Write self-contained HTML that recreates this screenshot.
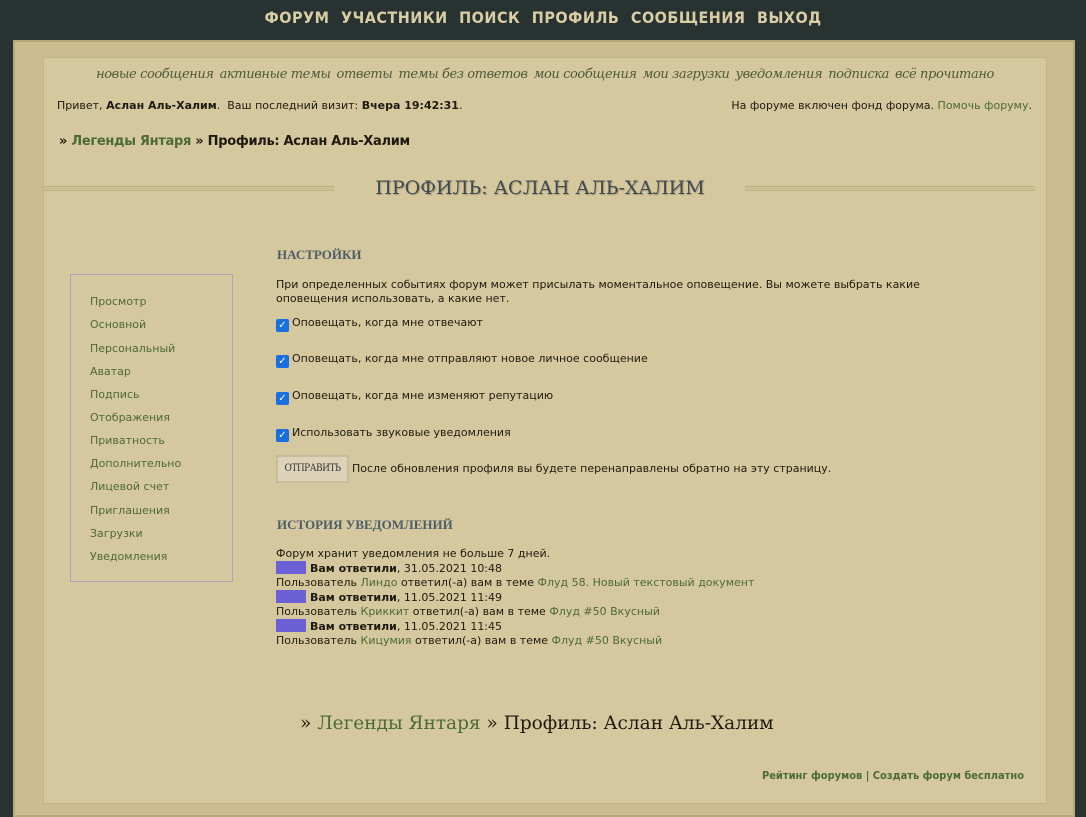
<!DOCTYPE html>
<html><head><meta charset="utf-8"><style>
body{margin:0;width:1086px;height:817px;overflow:hidden;background:#283230;font-family:"DejaVu Sans","Liberation Sans",sans-serif;font-size:11px;color:#1e1a10;position:relative}
a{color:#4c6a36;text-decoration:none}
.top{position:absolute;top:0;left:0;width:1086px;height:38px;text-align:center;line-height:35px;font-family:"DejaVu Sans Condensed","Liberation Sans",sans-serif;font-weight:bold;font-size:16px;color:#d9cda6;letter-spacing:.5px;word-spacing:6px}
.frame{position:absolute;left:13px;top:40px;width:1062px;height:777px;background:#cbbd90;box-shadow:inset 0 0 0 2px #b8a878}
.inner{position:absolute;left:30px;top:17px;width:1002px;height:745px;background:#d5c89e;border:1px solid #c2b384}
.nav2{position:absolute;top:9px;left:0;width:1002px;text-align:center;font-family:"DejaVu Serif",serif;font-style:italic;font-size:13px;color:#4d5a3a;letter-spacing:-.4px}
.nav2 span{margin:0 3px}
.abs{position:absolute}
.hr{position:absolute;top:128px;height:3px;border-top:1px solid #bfb184;border-bottom:1px solid #bfb184;background:#cdbf94}
.side{position:absolute;left:26px;top:216px;width:161px;height:306px;border:1px solid #a9a7b6}
.side div{position:absolute;left:19px;font-size:11px;color:#4c6a36}
.h{font-family:"Liberation Serif",serif;font-weight:bold;font-size:13px;color:#4d5d68}
.cb{display:inline-block;width:13px;height:13px;background:#1a6fe0;border-radius:2px;color:#fff;font-size:10px;line-height:13px;text-align:center;vertical-align:-2px;margin-right:3px}
.sq{display:inline-block;width:30px;height:13px;background:#6b60d6;vertical-align:-2px;margin-right:4px}
</style></head><body>
<div class="top">ФОРУМ УЧАСТНИКИ ПОИСК ПРОФИЛЬ СООБЩЕНИЯ ВЫХОД</div>
<div class="frame"><div class="inner">
<div class="nav2"><span>новые сообщения</span><span>активные темы</span><span>ответы</span><span>темы без ответов</span><span>мои сообщения</span><span>мои загрузки</span><span>уведомления</span><span>подписка</span><span>всё прочитано</span></div>
<div class="abs" style="left:13px;top:41px">Привет, <b>Аслан Аль-Халим</b>.&nbsp; Ваш последний визит: <b>Вчера 19:42:31</b>.</div>
<div class="abs" style="right:14px;top:41px">На форуме включен фонд форума. <a>Помочь форуму</a>.</div>
<div class="abs" style="left:15px;top:76px;font-size:13px;font-weight:bold;letter-spacing:-.3px">» <a style="font-weight:bold">Легенды Янтаря</a> » Профиль: Аслан Аль-Халим</div>
<div class="hr" style="left:0;width:290px"></div>
<div class="hr" style="left:701px;width:290px"></div>
<div class="abs" style="left:296px;top:119px;width:400px;text-align:center;font-family:'DejaVu Serif',serif;font-size:19px;color:#3b4a56;text-shadow:1px 1px 1px #a99a6c">ПРОФИЛЬ: АСЛАН АЛЬ-ХАЛИМ</div>
<div class="side">
<div style="top:20px">Просмотр</div><div style="top:43px">Основной</div><div style="top:67px">Персональный</div><div style="top:90px">Аватар</div><div style="top:113px">Подпись</div><div style="top:136px">Отображения</div><div style="top:159px">Приватность</div><div style="top:182px">Дополнительно</div><div style="top:205px">Лицевой счет</div><div style="top:229px">Приглашения</div><div style="top:252px">Загрузки</div><div style="top:275px">Уведомления</div>
</div>
<div class="abs h" style="left:233px;top:189px">НАСТРОЙКИ</div>
<div class="abs" style="left:232px;top:220px;line-height:14px;width:680px">При определенных событиях форум может присылать моментальное оповещение. Вы можете выбрать какие оповещения использовать, а какие нет.</div>
<div class="abs" style="left:232px;top:258px"><span class="cb">✓</span>Оповещать, когда мне отвечают</div>
<div class="abs" style="left:232px;top:294px"><span class="cb">✓</span>Оповещать, когда мне отправляют новое личное сообщение</div>
<div class="abs" style="left:232px;top:331px"><span class="cb">✓</span>Оповещать, когда мне изменяют репутацию</div>
<div class="abs" style="left:232px;top:368px"><span class="cb">✓</span>Использовать звуковые уведомления</div>
<div class="abs" style="left:232px;top:397px;width:73px;height:28px;background:#ddd3b8;border:2px solid #c7bba0;box-sizing:border-box;text-align:center;line-height:24px;font-family:'DejaVu Serif Condensed',serif;font-size:10px;color:#333;letter-spacing:-.5px">ОТПРАВИТЬ</div>
<div class="abs" style="left:308px;top:404px">После обновления профиля вы будете перенаправлены обратно на эту страницу.</div>
<div class="abs h" style="left:233px;top:459px">ИСТОРИЯ УВЕДОМЛЕНИЙ</div>
<div class="abs" style="left:232px;top:489px;line-height:14px">Форум хранит уведомления не больше 7 дней.<br>
<span class="sq"></span><b>Вам ответили</b>, 31.05.2021 10:48<br>
Пользователь <a>Линдо</a> ответил(-а) вам в теме <a>Флуд 58. Новый текстовый документ</a><br>
<span class="sq"></span><b>Вам ответили</b>, 11.05.2021 11:49<br>
Пользователь <a>Криккит</a> ответил(-а) вам в теме <a>Флуд #50 Вкусный</a><br>
<span class="sq"></span><b>Вам ответили</b>, 11.05.2021 11:45<br>
Пользователь <a>Кицумия</a> ответил(-а) вам в теме <a>Флуд #50 Вкусный</a></div>
<div class="abs" style="left:256px;top:655px;font-family:'DejaVu Serif',serif;font-size:18.5px;color:#1e1a10">» <a>Легенды Янтаря</a> » Профиль: Аслан Аль-Халим</div>
<div class="abs" style="right:22px;top:711px;color:#4c6a36;font-weight:bold;font-family:'DejaVu Sans Condensed','DejaVu Sans',sans-serif">Рейтинг форумов | Создать форум бесплатно</div>
</div></div>
</body></html>
